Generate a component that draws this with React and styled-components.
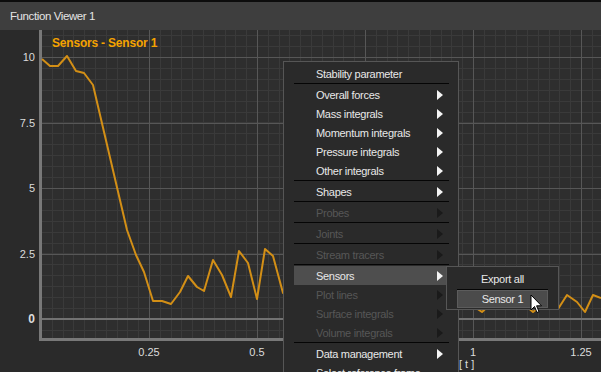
import React from "react"
import styled, { createGlobalStyle } from "styled-components"

const GlobalStyle = createGlobalStyle`
  html, body {
    margin: 0;
    padding: 0;
    background: #2a2a2a;
    overflow: hidden;
  }
  * {
    box-sizing: border-box;
  }
`

const Window = styled.div`
  width: 601px;
  height: 372px;
  display: flex;
  flex-direction: column;
  background: #2a2a2a;
  border-top: 2px solid #0c0c0c;
  font-family: "Liberation Sans", Arial, sans-serif;
`

const TitleBar = styled.div`
  height: 28px;
  flex: none;
  display: flex;
  align-items: center;
  padding-left: 10px;
  background: #3e3e3e;
  color: #e4e4e4;
  font-size: 11.5px;
  letter-spacing: -0.4px;
`

const ChartArea = styled.div`
  position: relative;
  flex: 1;
  overflow: hidden;
`

const ChartSvg = styled.svg`
  display: block;
  font-family: "Liberation Sans", Arial, sans-serif;
`

const ChartTitle = styled.div`
  position: absolute;
  left: 52px;
  top: 6px;
  color: #f5a300;
  font-weight: bold;
  font-size: 12px;
  letter-spacing: -0.2px;
`

const Menu = styled.div`
  position: absolute;
  left: 283px;
  top: 31px;
  width: 176px;
  padding: 2px 10px 0;
  background: #2a2a2a;
  border: 1px solid #565656;
  font-size: 11px;
  letter-spacing: -0.3px;
`

const Item = styled.div`
  position: relative;
  height: 19px;
  display: flex;
  align-items: center;
  padding: 0 5px 0 22px;
  color: ${props => (props.$disabled ? "#575757" : "#e8e8e8")};
  background: ${props => (props.$active ? "#4e4e4e" : "transparent")};
  white-space: nowrap;
`

const Arrow = styled.span`
  margin-left: auto;
  width: 0;
  height: 0;
  border-top: 5px solid transparent;
  border-bottom: 5px solid transparent;
  border-left: 6px solid ${props => (props.$disabled ? "#1a1a1a" : "#f4f4f4")};
`

const Separator = styled.div`
  height: 2px;
  margin-right: -1px;
  border-top: 1px solid #050505;
`

const SubMenu = styled.div`
  position: absolute;
  left: 152px;
  top: 0;
  width: 113px;
  padding: 2px 10px 1px;
  background: #2a2a2a;
  border: 1px solid #565656;
  letter-spacing: -0.3px;
`

const SubItem = styled.div`
  height: ${props => (props.$active ? 18 : 20)}px;
  display: flex;
  align-items: center;
  justify-content: center;
  color: #e8e8e8;
  background: ${props => (props.$active ? "#4b4b4b" : "transparent")};
  border: 1px solid ${props => (props.$active ? "#5c5c5c" : "transparent")};
`

const SubSeparator = styled.div`
  height: 1px;
  background: #050505;
`

const Cursor = styled.svg`
  position: absolute;
  left: 530px;
  top: 264px;
`

const toX = t => 41 + t * 432
const toY = v => 319 - v * 26.2

const linePoints = [
  [42, 59], [50, 66], [58, 66], [67, 56], [76, 71], [84, 73], [93, 85],
  [127, 230], [136, 255], [144, 272], [153, 301], [162, 301], [171, 304],
  [180, 292], [188, 276], [197, 287], [204, 291], [213, 260], [222, 275],
  [231, 297], [239, 251], [248, 263], [257, 299], [265, 249], [273, 256],
  [283, 293], [292, 280], [458, 300], [470, 304], [482, 312], [495, 300],
  [508, 309], [520, 301], [533, 312], [546, 302], [558, 309], [567, 295],
  [577, 302], [585, 312], [593, 295], [601, 298],
]

const Chart = () => {
  const minorX = []
  for (let x = 41 + 10.8; x < 601; x += 10.8) minorX.push(Math.round(x) + 0.5)
  const minorY = []
  for (let y = 319 + 10.92; y < 338; y += 10.92) minorY.push(Math.round(y) + 0.5)
  for (let y = 319 - 10.92; y > 30; y -= 10.92) minorY.push(Math.round(y) + 0.5)
  const majorX = [0.25, 0.5, 0.75, 1, 1.25].map(t => Math.round(toX(t)) + 0.5)
  const majorY = [2.5, 5, 7.5, 10].map(v => Math.round(toY(v)) + 0.5)
  const yLabels = [["10", 10], ["7.5", 7.5], ["5", 5], ["2.5", 2.5]]
  const xLabels = [["0.25", 0.25], ["0.5", 0.5], ["1", 1], ["1.25", 1.25]]

  return (
    <ChartSvg width="601" height="342" viewBox="0 30 601 342">
      <rect x="42" y="30" width="559" height="308" fill="#2e2e2e" />
      <g shapeRendering="crispEdges" strokeWidth="1">
        {minorX.map(x => (
          <line key={"mx" + x} x1={x} y1="30" x2={x} y2="338" stroke="#3a3a3a" />
        ))}
        {minorY.map(y => (
          <line key={"my" + y} x1="42" y1={y} x2="601" y2={y} stroke="#3a3a3a" />
        ))}
        {majorX.map(x => (
          <line key={"Mx" + x} x1={x} y1="30" x2={x} y2="338" stroke="#575757" />
        ))}
        {majorY.map(y => (
          <line key={"My" + y} x1="42" y1={y} x2="601" y2={y} stroke="#575757" />
        ))}
        <rect x="42" y="318" width="559" height="2" fill="#727272" />
        <rect x="39" y="30" width="3" height="311" fill="#787878" />
        <rect x="39" y="338" width="562" height="3" fill="#787878" />
      </g>
      <polyline
        points={linePoints.map(p => p.join(",")).join(" ")}
        fill="none"
        stroke="#d38f16"
        strokeWidth="2"
        strokeLinejoin="round"
      />
      <g fill="#dcdcdc" fontSize="11">
        {yLabels.map(([label, v]) => (
          <text key={label} x="35" y={toY(v) + 4} textAnchor="end">
            {label}
          </text>
        ))}
        <text x="35" y="323" textAnchor="end" fontWeight="bold" fontSize="12">
          0
        </text>
        {xLabels.map(([label, t]) => (
          <text key={label} x={toX(t)} y="356" textAnchor="middle">
            {label}
          </text>
        ))}
        <text x="459" y="368">[ t ]</text>
      </g>
    </ChartSvg>
  )
}

const menuEntries = [
  { label: "Stability parameter" },
  "sep",
  { label: "Overall forces", sub: true },
  { label: "Mass integrals", sub: true },
  { label: "Momentum integrals", sub: true },
  { label: "Pressure integrals", sub: true },
  { label: "Other integrals", sub: true },
  "sep",
  { label: "Shapes", sub: true },
  "sep",
  { label: "Probes", sub: true, disabled: true },
  "sep",
  { label: "Joints", sub: true, disabled: true },
  "sep",
  { label: "Stream tracers", sub: true, disabled: true },
  "sep",
  { label: "Sensors", sub: true, active: true },
  { label: "Plot lines", sub: true, disabled: true },
  { label: "Surface integrals", sub: true, disabled: true },
  { label: "Volume integrals", sub: true, disabled: true },
  "sep",
  { label: "Data management", sub: true },
  { label: "Select reference frame" },
]

const SensorsSubMenu = () => (
  <SubMenu>
    <SubItem>Export all</SubItem>
    <SubSeparator />
    <SubItem $active>Sensor 1</SubItem>
  </SubMenu>
)

const ContextMenu = () => (
  <Menu>
    {menuEntries.map((entry, i) => {
      if (entry === "sep") return <Separator key={i} />
      return (
        <Item key={i} $disabled={entry.disabled} $active={entry.active}>
          {entry.label}
          {entry.sub && <Arrow $disabled={entry.disabled} />}
          {entry.active && <SensorsSubMenu />}
        </Item>
      )
    })}
  </Menu>
)

const App = () => {
  return (
    <>
      <GlobalStyle />
      <Window>
        <TitleBar>Function Viewer 1</TitleBar>
        <ChartArea>
          <Chart />
          <ChartTitle>Sensors - Sensor 1</ChartTitle>
          <ContextMenu />
          <Cursor width="13" height="21" viewBox="0 0 13 21">
            <path
              d="M1 1 L1 16 L4.5 12.5 L7 18.5 L9 17.6 L6.6 11.8 L11.5 11.8 Z"
              fill="#ffffff"
              stroke="#000000"
              strokeWidth="1"
              strokeLinejoin="round"
            />
          </Cursor>
        </ChartArea>
      </Window>
    </>
  )
}

export default App
